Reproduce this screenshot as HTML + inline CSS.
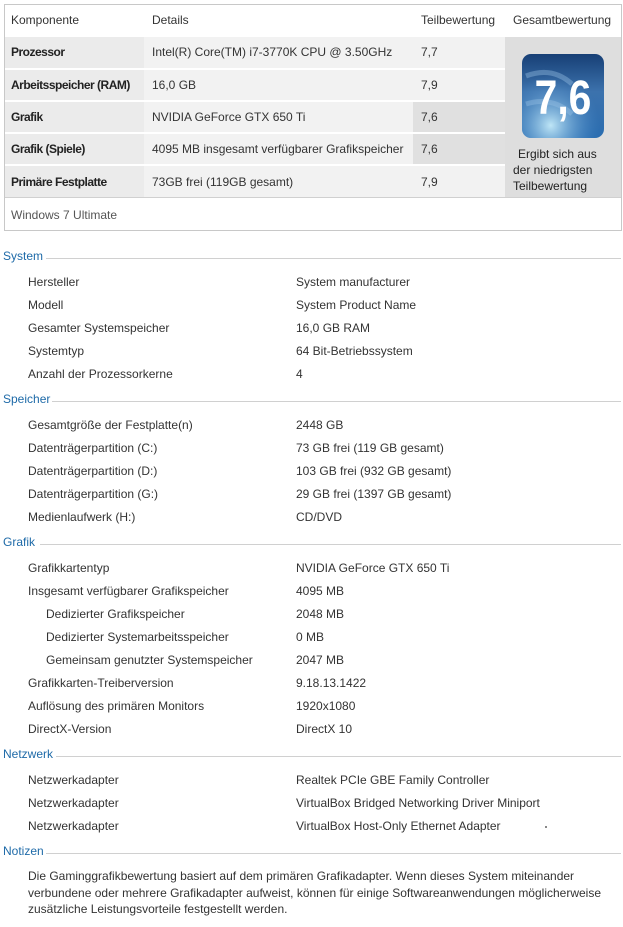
<!DOCTYPE html>
<html><head><meta charset="utf-8"><style>
body{margin:0;width:623px;height:927px;background:#fff;font-family:"Liberation Sans",sans-serif;font-size:12px;color:#333;position:relative;overflow:hidden}
.a{position:absolute;white-space:nowrap;line-height:14px}
.box{position:absolute;left:4px;top:4px;width:616px;height:225px;border:1px solid #c8c8c8}
.c{position:absolute}
.h{color:#1e6aa8}
.ln{position:absolute;height:1px;background:#d0d0d0;right:2px}
b{font-weight:bold;color:#222;letter-spacing:-0.5px}
</style></head><body>
<div class="box"></div>
<div class="c" style="left:5px;top:37px;width:139px;height:31px;background:#ebebeb"></div>
<div class="c" style="left:144px;top:37px;width:269px;height:31px;background:#f2f2f2"></div>
<div class="c" style="left:413px;top:37px;width:92px;height:31px;background:#f2f2f2"></div>
<div class="c" style="left:5px;top:70px;width:139px;height:30px;background:#ebebeb"></div>
<div class="c" style="left:144px;top:70px;width:269px;height:30px;background:#f2f2f2"></div>
<div class="c" style="left:413px;top:70px;width:92px;height:30px;background:#f2f2f2"></div>
<div class="c" style="left:5px;top:102px;width:139px;height:30px;background:#ebebeb"></div>
<div class="c" style="left:144px;top:102px;width:269px;height:30px;background:#f2f2f2"></div>
<div class="c" style="left:413px;top:102px;width:92px;height:30px;background:#e0e0e0"></div>
<div class="c" style="left:5px;top:134px;width:139px;height:30px;background:#ebebeb"></div>
<div class="c" style="left:144px;top:134px;width:269px;height:30px;background:#f2f2f2"></div>
<div class="c" style="left:413px;top:134px;width:92px;height:30px;background:#e0e0e0"></div>
<div class="c" style="left:5px;top:166px;width:139px;height:31px;background:#ebebeb"></div>
<div class="c" style="left:144px;top:166px;width:269px;height:31px;background:#f2f2f2"></div>
<div class="c" style="left:413px;top:166px;width:92px;height:31px;background:#f2f2f2"></div>
<div class="c" style="left:505px;top:37px;width:116px;height:160px;background:#dedede"></div>
<div class="c" style="left:5px;top:197px;width:616px;height:1px;background:#d0d0d0"></div>
<div class="a" style="left:11px;top:13px">Komponente</div>
<div class="a" style="left:152px;top:13px">Details</div>
<div class="a" style="left:421px;top:13px">Teilbewertung</div>
<div class="a" style="left:513px;top:13px">Gesamtbewertung</div>
<div class="a" style="left:11px;top:45px"><b>Prozessor</b></div>
<div class="a" style="left:152px;top:45px">Intel(R) Core(TM) i7-3770K CPU @ 3.50GHz</div>
<div class="a" style="left:421px;top:45px">7,7</div>
<div class="a" style="left:11px;top:78px"><b>Arbeitsspeicher (RAM)</b></div>
<div class="a" style="left:152px;top:78px">16,0 GB</div>
<div class="a" style="left:421px;top:78px">7,9</div>
<div class="a" style="left:11px;top:110px"><b>Grafik</b></div>
<div class="a" style="left:152px;top:110px">NVIDIA GeForce GTX 650 Ti</div>
<div class="a" style="left:421px;top:110px">7,6</div>
<div class="a" style="left:11px;top:142px"><b>Grafik (Spiele)</b></div>
<div class="a" style="left:152px;top:142px">4095 MB insgesamt verfügbarer Grafikspeicher</div>
<div class="a" style="left:421px;top:142px">7,6</div>
<div class="a" style="left:11px;top:175px"><b>Primäre Festplatte</b></div>
<div class="a" style="left:152px;top:175px">73GB frei (119GB gesamt)</div>
<div class="a" style="left:421px;top:175px">7,9</div>
<div class="a" style="left:11px;top:208px;color:#555">Windows 7 Ultimate</div>
<svg class="c" style="left:522px;top:54px" width="82" height="84" viewBox="0 0 82 84">
<defs><linearGradient id="g" x1="0" y1="0" x2="0" y2="1"><stop offset="0" stop-color="#173f75"/><stop offset="0.45" stop-color="#3c72ad"/><stop offset="1" stop-color="#2a6db0"/></linearGradient>
<radialGradient id="r" cx="0.35" cy="0.85" r="0.6"><stop offset="0" stop-color="#c6ecfa" stop-opacity="0.95"/><stop offset="1" stop-color="#4a8ccc" stop-opacity="0"/></radialGradient></defs>
<rect x="0" y="0" width="82" height="84" rx="9" fill="url(#g)"/>
<rect x="0" y="0" width="82" height="84" rx="9" fill="url(#r)"/>
<path d="M4 22 Q30 12 50 30" stroke="#9cc3e6" stroke-width="5" fill="none" opacity="0.4"/>
<path d="M4 50 Q30 42 50 60" stroke="#9cc3e6" stroke-width="5" fill="none" opacity="0.4"/>
<text x="41" y="60" text-anchor="middle" font-family="Liberation Sans" font-weight="bold" font-size="48" fill="#fff" transform="translate(41 0) scale(0.85 1) translate(-41 0)">7,6</text>
</svg>
<div class="a" style="left:518px;top:146px;line-height:16px;color:#222">Ergibt sich aus</div>
<div class="a" style="left:513px;top:162px;line-height:16px;color:#222">der niedrigsten</div>
<div class="a" style="left:513px;top:178px;line-height:16px;color:#222">Teilbewertung</div>

<div class="a h" style="left:3px;top:249px">System</div><div class="ln" style="left:46px;top:258px"></div>
<div class="a" style="left:28px;top:275px">Hersteller</div><div class="a" style="left:296px;top:275px">System manufacturer</div>
<div class="a" style="left:28px;top:298px">Modell</div><div class="a" style="left:296px;top:298px">System Product Name</div>
<div class="a" style="left:28px;top:321px">Gesamter Systemspeicher</div><div class="a" style="left:296px;top:321px">16,0 GB RAM</div>
<div class="a" style="left:28px;top:344px">Systemtyp</div><div class="a" style="left:296px;top:344px">64 Bit-Betriebssystem</div>
<div class="a" style="left:28px;top:367px">Anzahl der Prozessorkerne</div><div class="a" style="left:296px;top:367px">4</div>

<div class="a h" style="left:3px;top:392px">Speicher</div><div class="ln" style="left:52px;top:401px"></div>
<div class="a" style="left:28px;top:418px">Gesamtgröße der Festplatte(n)</div><div class="a" style="left:296px;top:418px">2448 GB</div>
<div class="a" style="left:28px;top:441px">Datenträgerpartition (C:)</div><div class="a" style="left:296px;top:441px">73 GB frei (119 GB gesamt)</div>
<div class="a" style="left:28px;top:464px">Datenträgerpartition (D:)</div><div class="a" style="left:296px;top:464px">103 GB frei (932 GB gesamt)</div>
<div class="a" style="left:28px;top:487px">Datenträgerpartition (G:)</div><div class="a" style="left:296px;top:487px">29 GB frei (1397 GB gesamt)</div>
<div class="a" style="left:28px;top:510px">Medienlaufwerk (H:)</div><div class="a" style="left:296px;top:510px">CD/DVD</div>

<div class="a h" style="left:3px;top:535px">Grafik</div><div class="ln" style="left:40px;top:544px"></div>
<div class="a" style="left:28px;top:561px">Grafikkartentyp</div><div class="a" style="left:296px;top:561px">NVIDIA GeForce GTX 650 Ti</div>
<div class="a" style="left:28px;top:584px">Insgesamt verfügbarer Grafikspeicher</div><div class="a" style="left:296px;top:584px">4095 MB</div>
<div class="a" style="left:46px;top:607px">Dedizierter Grafikspeicher</div><div class="a" style="left:296px;top:607px">2048 MB</div>
<div class="a" style="left:46px;top:630px">Dedizierter Systemarbeitsspeicher</div><div class="a" style="left:296px;top:630px">0 MB</div>
<div class="a" style="left:46px;top:653px">Gemeinsam genutzter Systemspeicher</div><div class="a" style="left:296px;top:653px">2047 MB</div>
<div class="a" style="left:28px;top:676px">Grafikkarten-Treiberversion</div><div class="a" style="left:296px;top:676px">9.18.13.1422</div>
<div class="a" style="left:28px;top:699px">Auflösung des primären Monitors</div><div class="a" style="left:296px;top:699px">1920x1080</div>
<div class="a" style="left:28px;top:722px">DirectX-Version</div><div class="a" style="left:296px;top:722px">DirectX 10</div>

<div class="a h" style="left:3px;top:747px">Netzwerk</div><div class="ln" style="left:56px;top:756px"></div>
<div class="a" style="left:28px;top:773px">Netzwerkadapter</div><div class="a" style="left:296px;top:773px">Realtek PCIe GBE Family Controller</div>
<div class="a" style="left:28px;top:796px">Netzwerkadapter</div><div class="a" style="left:296px;top:796px">VirtualBox Bridged Networking Driver Miniport</div>
<div class="a" style="left:28px;top:819px">Netzwerkadapter</div><div class="a" style="left:296px;top:819px">VirtualBox Host-Only Ethernet Adapter</div>
<div class="c" style="left:545px;top:826px;width:2px;height:2px;background:#888"></div>

<div class="a h" style="left:3px;top:844px">Notizen</div><div class="ln" style="left:46px;top:853px"></div>
<div class="a" style="left:28px;top:868px;line-height:16.5px;white-space:normal;width:590px">Die Gaminggrafikbewertung basiert auf dem primären Grafikadapter. Wenn dieses System miteinander verbundene oder mehrere Grafikadapter aufweist, können für einige Softwareanwendungen möglicherweise zusätzliche Leistungsvorteile festgestellt werden.</div>
</body></html>
